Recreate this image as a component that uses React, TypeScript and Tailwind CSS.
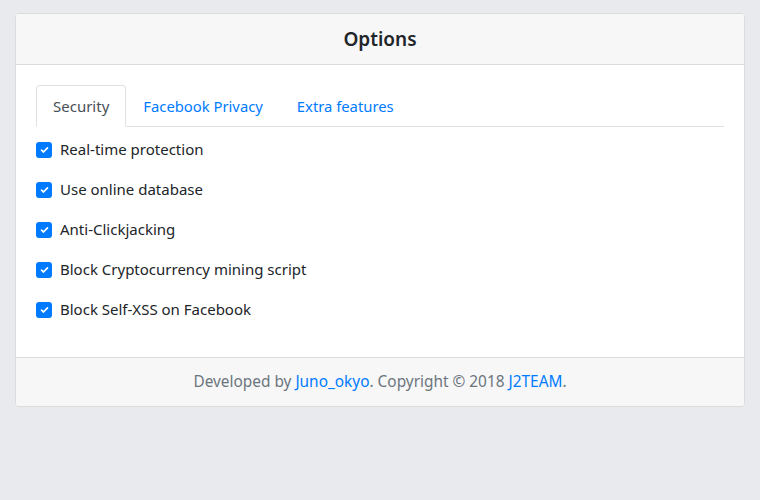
import React, { useState } from 'react';

const options = [
  'Real-time protection',
  'Use online database',
  'Anti-Clickjacking',
  'Block Cryptocurrency mining script',
  'Block Self-XSS on Facebook',
];

const tabs = ['Security', 'Facebook Privacy', 'Extra features'];

export default function App() {
  const [active, setActive] = useState(0);
  const [checked, setChecked] = useState<boolean[]>(options.map(() => true));

  return (
    <div
      className="min-h-[500px] w-full bg-[#e9eaee] pt-[13px] px-[15px] text-[#212529]"
      style={{ fontFamily: '"Noto Sans", "Open Sans", sans-serif' }}
    >
      <div className="rounded-[4px] border border-[#dcdcdc] bg-white overflow-hidden">
        {/* Header */}
        <div className="h-[51px] bg-[#f7f7f7] border-b border-[#dcdcdc] flex items-center justify-center">
          <h1 className="text-[19px] font-semibold text-[#212529]">Options</h1>
        </div>

        {/* Body */}
        <div className="px-[20px] pt-[20px] pb-[36px]">
          <div className="flex border-b border-[#dee2e6] h-[42px]">
            {tabs.map((t, i) => (
              <button
                key={t}
                onClick={() => setActive(i)}
                className={
                  i === active
                    ? 'px-[16px] h-[42px] -mb-px text-[15px] text-[#495057] bg-white border border-[#dee2e6] border-b-white rounded-t-[4px]'
                    : 'px-[16px] h-[42px] text-[14.8px] text-[#007bff] border border-transparent'
                }
              >
                {t}
              </button>
            ))}
          </div>

          <div className="flex flex-col gap-[17px] pt-[11px]">
            {options.map((o, i) => (
              <label key={o} className="flex items-center gap-[8px] h-[23px] text-[15px] cursor-pointer">
                <span
                  onClick={() => setChecked(c => c.map((v, j) => (j === i ? !v : v)))}
                  className={
                    checked[i]
                      ? 'w-[16px] h-[16px] rounded-[3px] bg-[#007bff] flex items-center justify-center'
                      : 'w-[16px] h-[16px] rounded-[3px] bg-white border border-[#adb5bd]'
                  }
                >
                  {checked[i] && (
                    <svg width="9" height="8" viewBox="0 0 8 8">
                      <path d="M1 4.2 L3 6 L7 1.8" fill="none" stroke="#fff" strokeWidth="1.7" strokeLinecap="round" strokeLinejoin="round" />
                    </svg>
                  )}
                </span>
                <span>{o}</span>
              </label>
            ))}
          </div>
        </div>

        {/* Footer */}
        <div className="h-[49px] bg-[#f7f7f7] border-t border-[#dcdcdc] flex items-center justify-center text-[15.4px] text-[#6c757d]">
          <span>
            Developed by <a className="text-[#007bff]">Juno_okyo</a>. Copyright © 2018{' '}
            <a className="text-[#007bff]">J2TEAM</a>.
          </span>
        </div>
      </div>
    </div>
  );
}
